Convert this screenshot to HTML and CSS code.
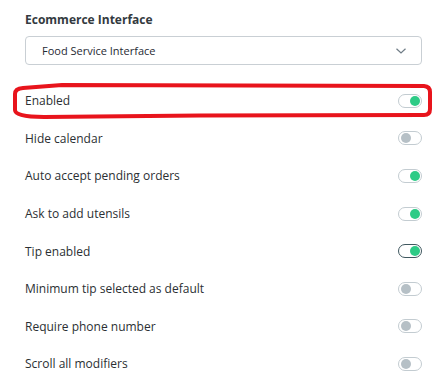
FILE: index.html
```html
<!DOCTYPE html>
<html lang="en">
<head>
  <meta charset="UTF-8" />
  <meta name="viewport" content="width=device-width, initial-scale=1.0"/>
  <title>Ecommerce Settings</title>
  <link rel="stylesheet" href="styles.css">
</head>
<body>
  <div class="panel">
    <div class="field-label">Ecommerce Interface</div>
    <div class="select">
      <span>Food Service Interface</span>
      <svg class="chevron" width="12" height="8" viewBox="0 0 12 8">
        <path d="M1.5 1.8 L6 6 L10.5 1.8" fill="none" stroke="#6f7c86" stroke-width="1.2"/>
      </svg>
    </div>
    <div class="settings">
      <div class="row highlighted">
        <span>Enabled</span>
        <span class="toggle on"></span>
        <svg class="marker" width="440" height="44" viewBox="0 0 440 44">
          <path d="M62 5 L424 6 Q430 6.5 430 12 L430 29 Q430 35 424 35 L200 35.5 L44 37 Q15 37 15 30 L15 14 Q15 8.5 23 8 Z"
                fill="none" stroke="#e8141c" stroke-width="4" stroke-linejoin="round"/>
        </svg>
      </div>
      <div class="row"><span>Hide calendar</span><span class="toggle"></span></div>
      <div class="row"><span>Auto accept pending orders</span><span class="toggle on"></span></div>
      <div class="row"><span>Ask to add utensils</span><span class="toggle on"></span></div>
      <div class="row"><span>Tip enabled</span><span class="toggle on focused"></span></div>
      <div class="row"><span>Minimum tip selected as default</span><span class="toggle"></span></div>
      <div class="row"><span>Require phone number</span><span class="toggle"></span></div>
      <div class="row"><span>Scroll all modifiers</span><span class="toggle"></span></div>
    </div>
  </div>
</body>
</html>
```

FILE: styles.css
```css
body {
  margin: 0;
  background-color: #fff;
  font-family: "Open Sans", "Noto Sans", Arial, sans-serif;
  color: #2b2f33;
}
.panel {
  padding: 12px 18px 0 25px;
}
.field-label {
  font-size: 12px;
  line-height: 16px;
  font-weight: 700;
  color: #333a40;
}
.select {
  margin-top: 8px;
  height: 29px;
  box-sizing: border-box;
  border: 1px solid #c9cfd4;
  border-radius: 4px;
  display: flex;
  align-items: center;
  justify-content: space-between;
  padding: 0 14px 0 16px;
  font-size: 11px;
  color: #1f2a33;
}
.chevron {
  margin-top: 1px;
}
.settings {
  margin-top: 17px;
  display: flex;
  flex-direction: column;
}
.row {
  position: relative;
  height: 37.6px;
  display: flex;
  align-items: center;
  justify-content: space-between;
  font-size: 12px;
}
.toggle {
  position: relative;
  width: 24px;
  height: 14px;
  box-sizing: border-box;
  border: 1.3px solid #c3ccd1;
  border-radius: 8px;
  background-color: #fff;
}
.toggle::after {
  content: "";
  position: absolute;
  top: 1px;
  left: 1.5px;
  width: 10px;
  height: 10px;
  border-radius: 50%;
  background-color: #b6c0c6;
}
.toggle.on::after {
  left: auto;
  right: 1.5px;
  background-color: #2dcb86;
}
.toggle.focused {
  border-color: #40585f;
}
.marker {
  position: absolute;
  left: -25px;
  top: -2px;
  pointer-events: none;
}
```
